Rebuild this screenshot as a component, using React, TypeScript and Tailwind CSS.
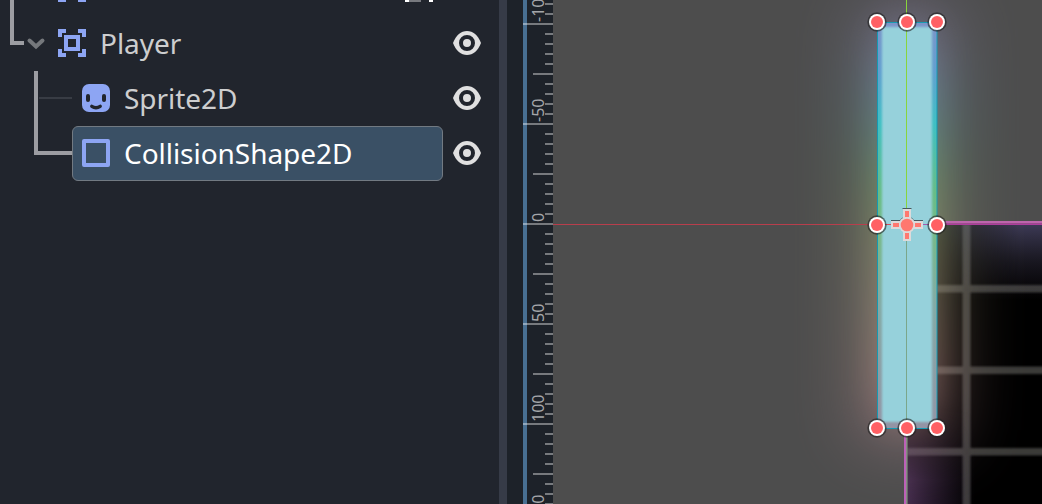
import React from "react";

type NodeRowProps = {
  label: string;
  icon: React.ReactNode;
  indent: string;
  selected?: boolean;
};

function Eye() {
  return (
    <svg width="28" height="24" viewBox="0 0 28 24" className="shrink-0">
      <path d="M0 12C3 4 8 0 14 0s11 4 14 12c-3 8-8 12-14 12S3 20 0 12z" fill="#e0e0e0" />
      <circle cx="14" cy="12" r="6" fill="none" stroke="#21252d" strokeWidth="4" />
    </svg>
  );
}

function BodyIcon() {
  return (
    <svg width="28" height="28" viewBox="0 0 28 28" fill="#8da5f3" className="shrink-0">
      <path d="M0 0h8v4H4v4H0zM20 0h8v8h-4V4h-4zM0 20h4v4h4v4H0zM24 20h4v8h-8v-4h4z" />
      <path fillRule="evenodd" d="M6 6h16v16H6zM10 10v8h8v-8z" />
    </svg>
  );
}

function SpriteIcon() {
  return (
    <svg width="28" height="28" viewBox="0 0 28 28" className="shrink-0">
      <rect width="28" height="28" rx="7" fill="#8da5f3" />
      <rect x="4" y="10" width="4" height="8" rx="2" fill="#21252d" />
      <rect x="20" y="10" width="4" height="8" rx="2" fill="#21252d" />
      <path d="M9.800 22.300Q14 25.200 18.200 22.300" fill="none" stroke="#21252d" strokeWidth="3.400" strokeLinecap="round" />
    </svg>
  );
}

function ShapeIcon() {
  return (
    <svg width="28" height="28" viewBox="0 0 28 28" className="shrink-0">
      <rect x="2" y="2" width="24" height="24" fill="none" stroke="#8da5f3" strokeWidth="4" strokeLinejoin="round" />
    </svg>
  );
}

function NodeRow({ label, icon, indent, selected }: NodeRowProps) {
  return (
    <div className={`flex h-[55px] items-center ${indent}`}>
      <div
        className={`flex h-full flex-1 items-center gap-[14px] rounded-[6px] border pb-px pl-[9px] ${
          selected ? "border-[#727a82] bg-[#3a5065] text-white" : "border-transparent text-[#cdcecf]"
        }`}
      >
        {icon}
        <span className="text-[28px] leading-none tracking-[-0.04px] whitespace-nowrap">{label}</span>
      </div>
      <div className="flex w-[56px] justify-start pb-px pl-[10px]">
        <Eye />
      </div>
    </div>
  );
}

function SceneTree() {
  return (
    <section className="relative h-full w-[499px] shrink-0 overflow-hidden bg-[#21252d] pt-[16px]">
      <svg className="absolute top-0 left-0" width="499" height="200" fill="none">
        <path d="M12 0V43H24M36 71V153H72" stroke="#9c9da2" strokeWidth="4" />
        <path d="M39 98H72" stroke="#383c44" strokeWidth="2" />
        <path d="M29.500 40.500L36 46.500L42.500 40.500" stroke="#75787c" strokeWidth="4" strokeLinecap="round" />
        <path d="M58 0h8v2h-8zM78 0h8v2h-8z" fill="#8da5f3" />
        <path d="M405 0h4v2h-4zM429 0h4v2h-4z" fill="#fff" />
        <path d="M409 0h12v2h-12z" fill="#77797e" />
      </svg>
      <NodeRow label="Player" icon={<BodyIcon />} indent="pl-[48px]" />
      <NodeRow label="Sprite2D" icon={<SpriteIcon />} indent="pl-[72px]" />
      <NodeRow label="CollisionShape2D" icon={<ShapeIcon />} indent="pl-[72px]" selected />
    </section>
  );
}

const TICKS = Array.from({ length: 51 }, (_, i) => i * 10 + 4);
const LABELS: [string, number][] = [
  ["-100", 22],
  ["-50", 122],
  ["0", 222],
  ["50", 322],
  ["100", 422],
  ["150", 522],
];

function Ruler() {
  return (
    <svg width="30" height="504" className="shrink-0">
      <rect width="30" height="504" fill="#1d2229" />
      <rect width="4" height="504" fill="#486f92" />
      {TICKS.map((y) => {
        const x = (y - 24) % 100 === 0 ? 0 : (y - 24) % 50 === 0 ? 10 : 22;
        return <rect key={y} x={x} y={y - 1} width={30 - x} height="2" fill="#fff" fillOpacity="0.4" />;
      })}
      {LABELS.map(([t, y]) => (
        <text key={t} transform={`translate(21 ${y}) rotate(-90)`} fontSize="16" fill="#a4a6a9">
          {t}
        </text>
      ))}
    </svg>
  );
}

const HANDLES = [
  [877, 22],
  [907, 22],
  [937, 22],
  [877, 225],
  [937, 225],
  [877, 428],
  [907, 428],
  [937, 428],
];

function Viewport() {
  return (
    <svg width="489" height="504" viewBox="553 0 489 504" className="shrink-0">
      <defs>
        <linearGradient id="spectrum" gradientUnits="userSpaceOnUse" x1="0" y1="-10" x2="0" y2="460">
          <stop offset="0" stopColor="#7d7090" />
          <stop offset="0.1" stopColor="#8880a0" />
          <stop offset="0.19" stopColor="#7d9cbc" />
          <stop offset="0.29" stopColor="#72aca8" />
          <stop offset="0.4" stopColor="#88b67c" />
          <stop offset="0.5" stopColor="#a4ac78" />
          <stop offset="0.65" stopColor="#b4a588" />
          <stop offset="0.82" stopColor="#c4988e" />
          <stop offset="1" stopColor="#967084" />
        </linearGradient>
        <linearGradient id="rim" gradientUnits="userSpaceOnUse" x1="0" y1="22" x2="0" y2="428">
          <stop offset="0" stopColor="#7d94c8" />
          <stop offset="0.12" stopColor="#639fd0" />
          <stop offset="0.25" stopColor="#40c0c4" />
          <stop offset="0.42" stopColor="#68bd86" />
          <stop offset="0.53" stopColor="#78b98a" />
          <stop offset="0.7" stopColor="#84aaa6" />
          <stop offset="1" stopColor="#9394a5" />
        </linearGradient>
        <linearGradient id="topglow" x1="0" y1="0" x2="0" y2="1">
          <stop offset="0" stopColor="#605c88" stopOpacity="0.62" />
          <stop offset="0.5" stopColor="#555070" stopOpacity="0.28" />
          <stop offset="1" stopColor="#504060" stopOpacity="0" />
        </linearGradient>
        <linearGradient id="topfade" gradientUnits="userSpaceOnUse" x1="915" y1="0" x2="1020" y2="0">
          <stop offset="0" stopColor="#000" />
          <stop offset="1" stopColor="#fff" />
        </linearGradient>
        <linearGradient id="sideglow" x1="0" y1="0" x2="1" y2="0">
          <stop offset="0" stopColor="#825592" stopOpacity="0.52" />
          <stop offset="1" stopColor="#604070" stopOpacity="0" />
        </linearGradient>
        <linearGradient id="sidefade" gradientUnits="userSpaceOnUse" x1="0" y1="410" x2="0" y2="480">
          <stop offset="0" stopColor="#000" />
          <stop offset="1" stopColor="#fff" />
        </linearGradient>
        <mask id="topmask">
          <rect x="907" y="225" width="135" height="80" fill="url(#topfade)" />
        </mask>
        <mask id="sidemask">
          <rect x="907" y="400" width="80" height="104" fill="url(#sidefade)" />
        </mask>
        <filter id="wide" filterUnits="userSpaceOnUse" x="700" y="-120" width="420" height="740" colorInterpolationFilters="sRGB">
          <feGaussianBlur stdDeviation="40 30" />
        </filter>
        <filter id="near" filterUnits="userSpaceOnUse" x="780" y="-60" width="260" height="600" colorInterpolationFilters="sRGB">
          <feGaussianBlur stdDeviation="18 20" />
        </filter>
        <filter id="soft" filterUnits="userSpaceOnUse" x="860" y="0" width="100" height="450">
          <feGaussianBlur stdDeviation="1.300" />
        </filter>
        <filter id="softgrid" filterUnits="userSpaceOnUse" x="880" y="210" width="190" height="310">
          <feGaussianBlur stdDeviation="0.900" />
        </filter>
      </defs>
      <rect x="553" width="489" height="504" fill="#4d4d4d" />
      <rect x="907" y="224" width="135" height="280" fill="#000" />
      <g fill="#3b3a38" filter="url(#softgrid)">
        <rect x="962.500" y="224" width="8" height="290" />
        <rect x="907" y="285" width="145" height="7.500" />
        <rect x="907" y="366.500" width="145" height="7.500" />
        <rect x="907" y="448" width="145" height="7.500" />
      </g>
      <rect x="907" y="225" width="135" height="75" fill="url(#topglow)" mask="url(#topmask)" />
      <rect x="907" y="400" width="68" height="104" fill="url(#sideglow)" mask="url(#sidemask)" />
      <rect x="874" y="0" width="66" height="450" fill="url(#spectrum)" opacity="0.62" filter="url(#wide)" />
      <rect x="878" y="25" width="58" height="395" fill="url(#spectrum)" opacity="0.46" filter="url(#near)" />
      <path d="M553 224.500H1042" stroke="#b83e4c" />
      <rect x="937" y="221" width="105" height="2.500" fill="#bd65ad" />
      <rect x="937" y="223.500" width="105" height="1.500" fill="#ad3d9c" />
      <rect x="904" y="428" width="2.500" height="76" fill="#bd60b8" />
      <rect x="906.300" y="428" width="1.200" height="76" fill="#87a383" />
      <rect x="878" y="22" width="59" height="406" fill="url(#rim)" />
      <rect x="882" y="27" width="50" height="395" rx="3" fill="#96d1db" filter="url(#soft)" />
      <rect x="877.500" y="22.500" width="59.500" height="406" fill="none" stroke="#169ab3" />
      <path d="M906.500 0V225" stroke="#89d53c" />
      <path d="M906.500 225V428" stroke="#7ba68a" />
      <path d="M878 224.500H893" stroke="#d34b5c" />
      <path d="M921 224.500H937" stroke="#a15caf" />
      <path d="M902.500 208.500H911.500M891 220.500H900L903 217.500M923 220.500H914L911 217.500" fill="none" stroke="#45595e" />
      <g fill="#dddada">
        <rect x="903" y="209" width="8" height="32" />
        <rect x="891" y="221" width="32" height="8" />
        <circle cx="907" cy="225" r="8" />
      </g>
      <g fill="#ff786f">
        <circle cx="907" cy="225" r="6.300" />
        <rect x="905" y="211" width="4" height="6" />
        <rect x="905" y="233" width="4" height="6" />
        <rect x="893" y="223" width="6" height="4" />
        <rect x="915" y="223" width="6" height="4" />
      </g>
      {HANDLES.map(([x, y]) => (
        <g key={`${x}-${y}`}>
          <circle cx={x} cy={y} r="9.700" fill="#202020" fillOpacity="0.6" />
          <circle cx={x} cy={y} r="8" fill="#fff" />
          <circle cx={x} cy={y} r="6" fill="#ff6064" />
        </g>
      ))}
    </svg>
  );
}

export default function App() {
  return (
    <main className="flex h-[504px] w-[1042px] overflow-hidden bg-[#1d2229] font-['Noto_Sans',sans-serif]">
      <SceneTree />
      <div className="w-2 shrink-0 bg-[#363b47]" />
      <div className="w-4 shrink-0" />
      <Ruler />
      <Viewport />
    </main>
  );
}
